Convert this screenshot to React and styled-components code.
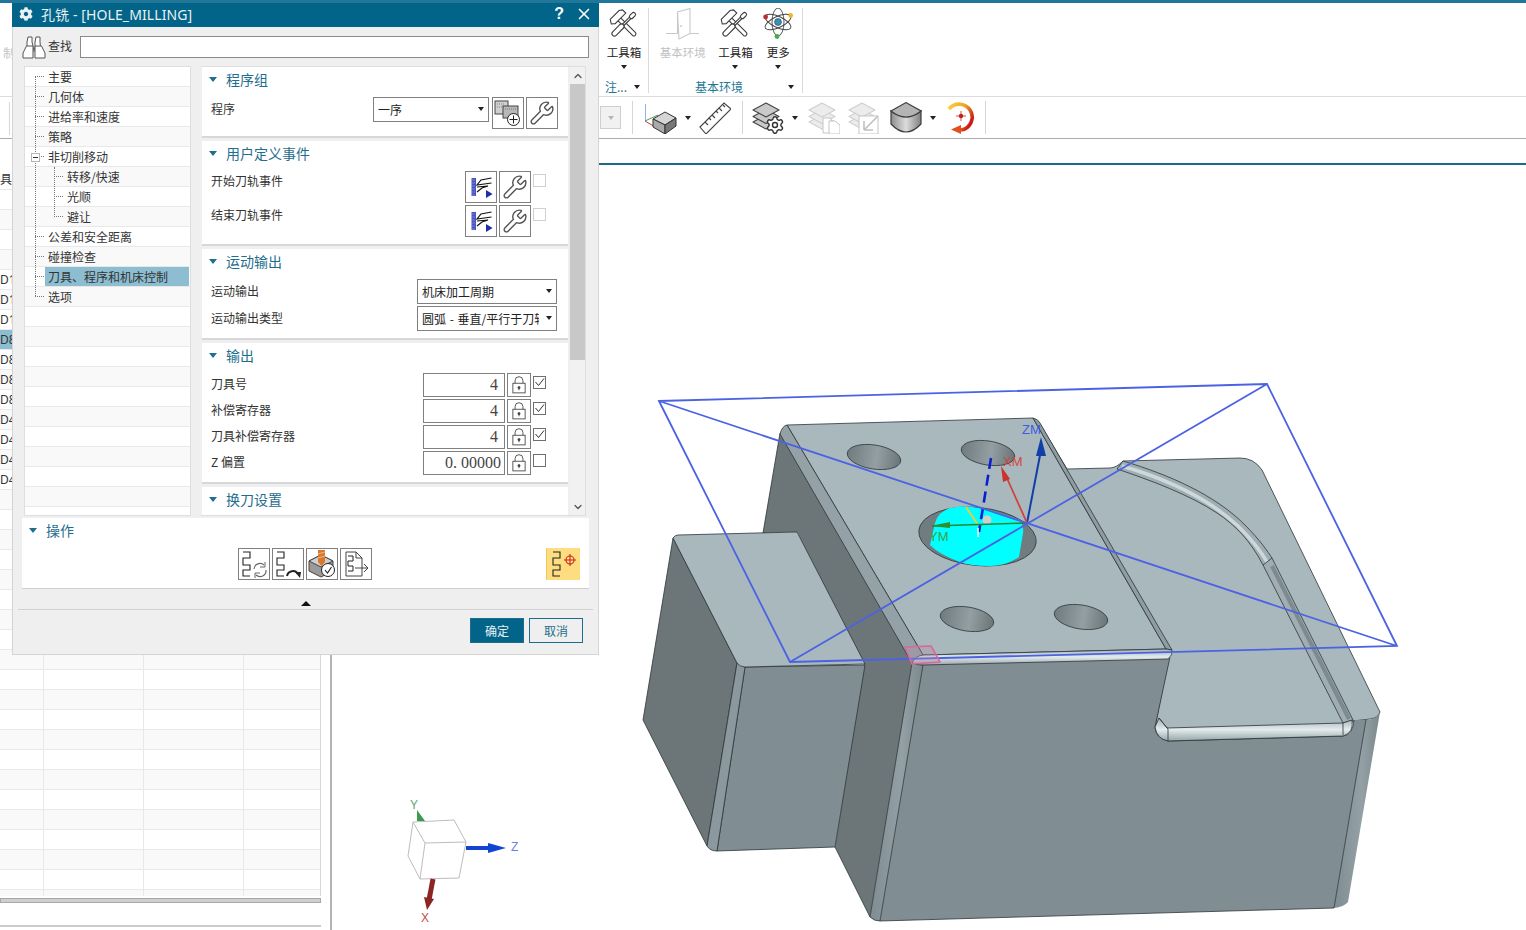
import React from "react";
import styled, { createGlobalStyle } from "styled-components";
import { Settings, Wrench, X, ChevronUp, ChevronDown } from "lucide-react";
import { FaCog } from "react-icons/fa";

const CJK = `"Noto Sans CJK SC", "Noto Sans", sans-serif`;

const Global = createGlobalStyle`
  html, body { margin: 0; padding: 0; background: #fff; }
  body { font-family: ${CJK}; font-size: 12px; color: #333; }
  * { box-sizing: border-box; }
`;

const Page = styled.div`
  position: relative;
  width: 1526px;
  height: 930px;
  overflow: hidden;
  display: flex;
  flex-direction: column;
  background: #fff;
`;
const TopStripe = styled.div`
  height: 3px;
  flex: none;
  background: #20779a;
`;
const Ribbon = styled.div`
  height: 94px;
  flex: none;
  display: flex;
  padding-top: 5px;
  border-bottom: 1px solid #dcdcdc;
`;
const RibbonHidden = styled.div`
  width: 600px;
  flex: none;
  color: #c4c4c4;
  padding: 37px 0 0 3px;
  line-height: 16px;
`;
const RibbonGroup = styled.div`
  flex: none;
  width: ${(p) => p.$w}px;
  height: 85px;
  border-right: 1px solid #dadada;
  display: flex;
  flex-direction: column;
`;
const RibbonItems = styled.div`
  display: flex;
  flex: none;
  height: 67px;
`;
const RibbonItem = styled.div`
  width: ${(p) => p.$w}px;
  display: flex;
  flex-direction: column;
  align-items: center;
  color: ${(p) => (p.$off ? "#c2c2c2" : "#222")};
  font-size: 11.5px;
  line-height: 16px;
  svg { display: block; flex: none; }
  span:first-of-type { margin-top: 4px; }
`;
const GroupFooter = styled.div`
  display: flex;
  flex: none;
  align-items: center;
  height: 14px;
  margin-top: 5px;
  padding: 0 ${(p) => p.$right}px 0 ${(p) => p.$left}px;
  color: #1f7797;
  font-size: 12px;
  line-height: 14px;
  i { margin-left: auto; }
`;
const Caret = styled.i`
  display: inline-block;
  flex: none;
  width: 0;
  height: 0;
  border-left: 3.5px solid transparent;
  border-right: 3.5px solid transparent;
  border-top: 4px solid ${(p) => p.$c || "#222"};
  margin-left: ${(p) => p.$ml || 0}px;
`;
const ItemCaret = styled(Caret)`
  margin-top: 5px;
`;
const SectionCaret = styled.i`
  display: inline-block;
  flex: none;
  width: 0;
  height: 0;
  border-left: 4.5px solid transparent;
  border-right: 4.5px solid transparent;
  border-top: 5px solid #1f6e8e;
  margin-right: 9px;
`;
const Toolbar = styled.div`
  height: 42px;
  flex: none;
  display: flex;
  align-items: center;
  border-bottom: 1px solid #ababab;
`;
const ToolbarHidden = styled.div`
  width: 600px;
  height: 32px;
  flex: none;
  padding-left: 9px;
`;
const Divider = styled.div`
  width: 1px;
  height: 33px;
  flex: none;
  background: #d6d6d6;
  margin-left: ${(p) => p.$ml || 0}px;
`;
const GreyDrop = styled.div`
  width: 21px;
  height: 23px;
  flex: none;
  border: 1px solid #cfcfcf;
  background: #f1f1f1;
  display: flex;
  align-items: center;
  justify-content: center;
`;
const ToolSlot = styled.div`
  flex: none;
  display: flex;
  margin-left: ${(p) => p.$ml}px;
`;
const MainRow = styled.div`
  flex: 1;
  display: flex;
  min-height: 0;
`;
const TablePanel = styled.div`
  width: 332px;
  flex: none;
  border-right: 2px solid #b4b4b4;
  padding-top: 31px;
  display: flex;
  flex-direction: column;
`;
const Table = styled.div`
  width: 321px;
  height: 726px;
  overflow: hidden;
  border-right: 1px solid #d8d8d8;
  flex: none;
`;
const TableRow = styled.div`
  display: grid;
  grid-template-columns: 44px 100px 100px 76px;
  height: 20px;
  background: ${(p) => (p.$sel ? "#8dbdd0" : p.$alt ? "#f9f9f9" : "#fff")};
  border-bottom: 1px solid #e8e8e8;
`;
const TableCell = styled.div`
  border-right: 1px solid #e8e8e8;
  font-family: "Noto Sans", "Noto Sans CJK SC", sans-serif;
  font-size: 12px;
  line-height: 19px;
  color: #333;
  white-space: nowrap;
  overflow: hidden;
  &:last-child { border-right: 0; }
`;
const HScroll = styled.div`
  width: 321px;
  height: 5px;
  flex: none;
  margin-top: 2px;
  background: #cfcfcf;
  border: 1px solid #a8a8a8;
`;
const PanelRule = styled.div`
  width: 321px;
  height: 2px;
  flex: none;
  margin-top: 22px;
  background: #cccccc;
`;
const ViewColumn = styled.div`
  flex: 1;
  min-width: 0;
  display: flex;
  flex-direction: column;
`;
const Band = styled.div`
  height: 26px;
  flex: none;
  border-bottom: 2px solid #1d6a88;
`;
const Viewport = styled.div`
  flex: 1;
  min-height: 0;
  svg { display: block; }
`;

/* dialog */
const Dialog = styled.div`
  position: absolute;
  left: 12px;
  top: 3px;
  width: 587px;
  height: 652px;
  background: #efefef;
  border: 1px solid #d4d4d4;
  border-top: 0;
  display: flex;
  flex-direction: column;
`;
const TitleBar = styled.div`
  height: 24px;
  flex: none;
  margin: 0 -1px;
  background: #026488;
  color: #e9f1f4;
  display: flex;
  align-items: center;
  padding: 0 6px 2px 7px;
  font-family: "Noto Sans", "Noto Sans CJK SC", sans-serif;
  font-size: 14px;
`;
const TitleText = styled.div`
  margin-left: 8px;
  flex: 1;
  white-space: nowrap;
  letter-spacing: 0.1px;
`;
const HelpMark = styled.span`
  font-family: "Liberation Sans", sans-serif;
  font-weight: 700;
  font-size: 16px;
  color: #fff;
  margin-right: 11px;
`;
const SearchRow = styled.div`
  height: 36px;
  flex: none;
  display: flex;
  align-items: flex-start;
  padding: 9px 9px 0 9px;
  font-size: 12px;
`;
const SearchLabel = styled.div`
  margin-left: 2px;
  width: 32px;
  line-height: 20px;
`;
const SearchInput = styled.div`
  flex: 1;
  height: 22px;
  background: #fff;
  border: 1px solid #8a8a8a;
`;
const DialogBody = styled.div`
  flex: none;
  height: 450px;
  margin: 3px 0 0 11px;
  display: flex;
  gap: 10px;
`;
const Tree = styled.div`
  position: relative;
  width: 167px;
  flex: none;
  background: #fff;
  border: 1px solid #dedede;
  overflow: hidden;
`;
const TreeRow = styled.div`
  height: 20px;
  display: flex;
  align-items: stretch;
  background: ${(p) => (p.$alt ? "#f9f9f9" : "#fff")};
  border-bottom: 1px solid #e8e8e8;
  padding-left: ${(p) => (p.$level ? 39 : 20)}px;
  line-height: 19px;
  font-size: 12px;
  color: #333;
  position: relative;
  &::before {
    content: ${(p) => (p.$label ? '""' : "none")};
    position: absolute;
    left: ${(p) => (p.$level ? 29 : 10)}px;
    width: 9px;
    top: 9px;
    border-top: 1px dotted #777;
  }
`;
const TreeLabel = styled.div`
  flex: 1;
  padding-left: 3px;
  margin-right: 1px;
  background: ${(p) => (p.$sel ? "#8dbdd0" : "transparent")};
`;
const TreeGuide = styled.div`
  position: absolute;
  left: ${(p) => p.$x}px;
  top: ${(p) => p.$top}px;
  height: ${(p) => p.$h}px;
  border-left: 1px dotted #777;
`;
const Expander = styled.div`
  position: absolute;
  left: 6px;
  top: 86px;
  width: 9px;
  height: 9px;
  background: #fff;
  border: 1px solid #b5b5b5;
  &::after {
    content: "";
    position: absolute;
    left: 1px;
    right: 1px;
    top: 3px;
    border-top: 1px solid #333;
  }
`;
const Pane = styled.div`
  width: 385px;
  flex: none;
  display: flex;
  border: 1px solid #dedede;
  border-left: 0;
  overflow: hidden;
`;
const SectionColumn = styled.div`
  width: 367px;
  flex: none;
  padding-left: 1px;
  display: flex;
  flex-direction: column;
  gap: 3px;
  overflow: hidden;
`;
const Section = styled.div`
  flex: none;
  height: ${(p) => p.$h}px;
  background: #fff;
  border-bottom: 2px solid #d8d8d8;
`;
const SectionHead = styled.div`
  height: 26px;
  display: flex;
  align-items: center;
  padding: 0 0 2px 7px;
  color: #1f6e8e;
  font-size: 14px;
`;
const SectionBody = styled.div`
  padding: 4px ${(p) => p.$right}px 0 9px;
  display: flex;
  flex-direction: column;
  gap: 2px;
`;
const FieldRow = styled.div`
  display: flex;
  justify-content: space-between;
  align-items: flex-start;
`;
const FieldLabel = styled.div`
  font-size: 12px;
  line-height: ${(p) => p.$lh}px;
  color: #333;
  white-space: nowrap;
`;
const Controls = styled.div`
  display: flex;
  gap: 2px;
  align-items: flex-start;
`;
const Select = styled.div`
  width: ${(p) => p.$w}px;
  height: 25px;
  flex: none;
  background: #fff;
  border: 1px solid #808080;
  display: flex;
  align-items: center;
  padding: 0 4px 1px;
  font-size: 12px;
  color: #222;
  white-space: nowrap;
  overflow: hidden;
  margin-right: ${(p) => p.$mr || 0}px;
  span { flex: 1; overflow: hidden; word-spacing: 1px; }
  i { margin-left: 7px; }
`;
const IconButton = styled.div`
  width: 32px;
  height: 32px;
  flex: none;
  background: #fff;
  border: 1px solid #808080;
  display: flex;
  align-items: center;
  justify-content: center;
  svg { display: block; }
`;
const Check = styled.div`
  width: 13px;
  height: 13px;
  flex: none;
  margin-top: 3px;
  background: #fff;
  border: 1px solid ${(p) => (p.$faint ? "#d0d0d0" : "#6f6f6f")};
  display: flex;
  align-items: center;
  justify-content: center;
`;
const NumberField = styled.div`
  width: 82px;
  height: 24px;
  flex: none;
  background: #fff;
  border: 1px solid #808080;
  display: flex;
  align-items: center;
  justify-content: ${(p) => (p.$long ? "flex-start" : "flex-end")};
  padding: ${(p) => (p.$long ? "0 0 0 21px" : "0 6px 0 0")};
  font-family: "Liberation Serif", serif;
  font-size: 16px;
  color: #444;
  overflow: hidden;
  white-space: pre;
`;
const LockButton = styled.div`
  width: 24px;
  height: 24px;
  flex: none;
  background: #fff;
  border: 1px solid #808080;
  display: flex;
  align-items: center;
  justify-content: center;
`;
const Scrollbar = styled.div`
  width: 16px;
  flex: none;
  margin-left: 2px;
  background: #f1f1f1;
  display: flex;
  flex-direction: column;
  align-items: center;
  color: #555;
`;
const ScrollArrow = styled.div`
  height: 17px;
  flex: none;
  display: flex;
  align-items: center;
  justify-content: center;
`;
const ScrollThumb = styled.div`
  width: 100%;
  height: 276px;
  flex: none;
  background: #c8c8c8;
`;
const ScrollGap = styled.div`
  flex: 1;
`;
const OpsPanel = styled.div`
  flex: none;
  height: 71px;
  margin: 2px 0 0 9px;
  width: 567px;
  background: #fff;
  border-bottom: 1px solid #cfcfcf;
  padding-right: 9px;
`;
const OpsButtons = styled.div`
  display: flex;
  gap: 2px;
  padding-left: 216px;
  margin-top: 4px;
`;
const YellowButton = styled.div`
  width: 34px;
  height: 32px;
  flex: none;
  margin-left: auto;
  background: #fedd80;
  border-left: 1px solid #f2c95a;
  display: flex;
  align-items: center;
  justify-content: center;
  svg { display: block; }
`;
const Collapser = styled.div`
  flex: none;
  height: 21px;
  margin: 0 5px;
  border-bottom: 1px solid #d0d0d0;
  display: flex;
  justify-content: center;
  padding: 12px 0 0 0;
`;
const UpCaret = styled.i`
  display: block;
  width: 0;
  height: 0;
  border-left: 5px solid transparent;
  border-right: 5px solid transparent;
  border-bottom: 5px solid #111;
`;
const DialogFooter = styled.div`
  flex: 1;
  display: flex;
  justify-content: flex-end;
  gap: 5px;
  padding: 8px 15px 0 0;
`;
const ActionButton = styled.div`
  width: 54px;
  height: 25px;
  display: flex;
  align-items: center;
  justify-content: center;
  font-size: 12px;
  background: ${(p) => (p.$primary ? "#026488" : "transparent")};
  color: ${(p) => (p.$primary ? "#e8f1f5" : "#1f6e8e")};
  border: 1px solid #1c6d8d;
`;

/* ---------- icons ---------- */
const ToolsIcon = () => (
  <svg width="32" height="32" viewBox="0 0 32 32" fill="#fff" stroke="#3d3d3d" strokeWidth="1.1">
    <g transform="rotate(-45 16 16)">
      <rect x="14" y="8" width="4" height="24" rx="2" />
      <path d="M7 7 L9.5 3 H22 L25 5 V9.5 H10 Z" />
    </g>
    <g transform="rotate(45 16 16)">
      <rect x="15" y="6" width="2" height="12" />
      <rect x="14" y="0.5" width="4" height="7" rx="2" />
      <rect x="13.5" y="17" width="5" height="15" rx="2.5" />
    </g>
  </svg>
);
const DoorIcon = () => (
  <svg width="34" height="32" viewBox="0 0 34 32" fill="none" stroke="#c9c9c9" strokeWidth="1.1">
    <path d="M0 25.5 H11.5 V4 L24 0.5 V25.5 H33" />
    <path d="M11.5 4 L13 31 L24 25.5" />
    <circle cx="15" cy="18" r="0.4" />
  </svg>
);
const AtomIcon = () => (
  <svg width="32" height="32" viewBox="0 0 32 32" fill="none" stroke="#444" strokeWidth="0.9">
    <ellipse cx="16" cy="14" rx="14" ry="5.5" transform="rotate(25 16 14)" />
    <ellipse cx="16" cy="14" rx="14" ry="5.5" transform="rotate(-25 16 14)" />
    <ellipse cx="16" cy="14" rx="14" ry="6" transform="rotate(90 16 14)" />
    <circle cx="16" cy="14" r="3.4" fill="#3c8fb6" stroke="#2b6c8a" />
    <circle cx="3.6" cy="9" r="2.4" fill="#c22b2b" stroke="none" />
    <circle cx="28.6" cy="7.4" r="2.4" fill="#f0b323" stroke="none" />
    <circle cx="15" cy="28.5" r="2.4" fill="#42b04a" stroke="none" />
  </svg>
);
const WcsIcon = () => (
  <svg width="32" height="32" viewBox="0 0 32 32" fill="none">
    <path d="M0 19 L12 26" stroke="#d5353b" strokeWidth="1" />
    <path d="M0 19 L13 13" stroke="#46a84a" strokeWidth="1" />
    <path d="M0 2 V19" stroke="#2f62c4" strokeWidth="1" />
    <path d="M20 10 L31 16 L20 23 L8 17 Z" fill="#d5d5d5" stroke="#333" strokeWidth="1" />
    <path d="M8 17 V25 L20 32 V23 Z" fill="#aaa" stroke="#333" strokeWidth="1" />
    <path d="M31 16 V24 L20 32 V23 Z" fill="#777" stroke="#333" strokeWidth="1" />
  </svg>
);
const RulerIcon = () => (
  <svg width="32" height="32" viewBox="0 0 32 32" fill="#fff" stroke="#444" strokeWidth="1.1">
    <path d="M1 25 L25 1 L32 7 L7 32 Z" />
    <path d="M6 20 L9 23 M10 16 L12 18 M13 13 L16 16 M17 9 L19 11 M20 6 L23 9 M24 3 L26 5" />
  </svg>
);
const LayerStack = ({ c, fill }) => (
  <g stroke={c} fill={fill} strokeWidth="1.1" strokeLinejoin="round">
    <path d="M14 13 L27 20 L14 27 L1 20 Z" />
    <path d="M14 7.5 L27 14.5 L14 21.5 L1 14.5 Z" />
    <path d="M14 1 L27 8 L14 15 L1 8 Z" />
  </g>
);
const LayersGearIcon = () => (
  <svg width="32" height="32" viewBox="0 0 32 32" fill="none">
    <LayerStack c="#444" fill="#c9c9c9" />
    <Settings x={13} y={13} width={20} height={20} strokeWidth={1.7} color="#333" fill="#fff" />
  </svg>
);
const LayersDocIcon = () => (
  <svg width="32" height="32" viewBox="0 0 32 32" fill="none">
    <LayerStack c="#cfcfcf" fill="#ececec" />
    <path d="M15 16 H23 V31 H15 Z" fill="#fff" stroke="#c5c5c5" />
    <path d="M21 19 H27 L32 23 V32 H21 Z" fill="#fff" stroke="#c5c5c5" />
  </svg>
);
const LayersArrowIcon = () => (
  <svg width="32" height="32" viewBox="0 0 32 32" fill="none">
    <LayerStack c="#cfcfcf" fill="#ececec" />
    <path d="M11 14 H30 V32 H11 Z" fill="#fff" stroke="#c5c5c5" />
    <path d="M16 28 V19 M16 28 H25 M16 28 L30 14" stroke="#c0c0c0" strokeWidth="1.6" />
  </svg>
);
const SolidIcon = () => (
  <svg width="32" height="32" viewBox="0 0 32 32">
    <defs>
      <linearGradient id="solidSide" x1="0" x2="1" y1="0" y2="0">
        <stop offset="0" stopColor="#8e8e8e" />
        <stop offset="0.5" stopColor="#dcdcdc" />
        <stop offset="1" stopColor="#808080" />
      </linearGradient>
    </defs>
    <path d="M1 9 V22 Q16 38 31 22 V9 Q16 21 1 9 Z" fill="url(#solidSide)" stroke="#3d3d3d" strokeWidth="1.2" />
    <path d="M1 9 L16 0.6 L31 9 Q16 21 1 9 Z" fill="#b4b4b4" stroke="#3d3d3d" strokeWidth="1.2" />
  </svg>
);
const RedoIcon = () => (
  <svg width="30" height="32" viewBox="0 0 30 32" fill="none">
    <defs>
      <linearGradient id="redoArc" x1="0" x2="1" y1="0" y2="0.6">
        <stop offset="0" stopColor="#f9d23a" />
        <stop offset="0.55" stopColor="#f2a024" />
        <stop offset="1" stopColor="#cf1a16" />
      </linearGradient>
    </defs>
    <path d="M2 7 A13 13 0 1 1 14 28" stroke="url(#redoArc)" strokeWidth="3.6" />
    <path d="M14 23 L14 32 L4 27.5 Z" fill="#e0501e" />
    <circle cx="14" cy="14" r="2.2" fill="#c4211c" />
    <path d="M14 9 V19 M9 14 H19" stroke="#c4211c" strokeWidth="0.8" />
  </svg>
);
const Binoculars = () => (
  <svg width="24" height="24" viewBox="0 0 24 24" fill="#fff" stroke="#555" strokeWidth="1">
    <path d="M6 1 H10 V6 L11 10 V16 H5 V6 Z" />
    <path d="M14 1 H18 V6 L19 16 H13 V6 Z" />
    <path d="M4.5 10 H11 V22 H1 V17 Z" />
    <path d="M13 10 H19.5 L23 17 V22 H13 Z" />
    <path d="M11 13 H13" />
  </svg>
);
const ProgramAddIcon = () => (
  <svg width="28" height="28" viewBox="0 0 28 28" fill="none" stroke="#444" strokeWidth="1">
    <rect x="1" y="2" width="13" height="13" fill="#d0d0d0" />
    <path d="M3 5 H11 M3 8 H9" stroke="#888" strokeDasharray="1 1" />
    <rect x="9" y="7" width="15" height="12" fill="#b8b8b8" />
    <path d="M11 10 H22" stroke="#777" strokeDasharray="1 1" />
    <circle cx="19.5" cy="20.5" r="6" fill="#fff" stroke="#222" />
    <path d="M19.5 16.5 V24.5 M15.5 20.5 H23.5" stroke="#222" />
  </svg>
);
const EventIcon = () => (
  <svg width="26" height="26" viewBox="0 0 26 26">
    <rect x="3.5" y="4" width="4.5" height="18" fill="#4a55c4" />
    <path d="M4.5 6 H7 M4.5 9 H7 M4.5 12 H7 M4.5 15 H7 M4.5 18 H7 M4.5 21 H7" stroke="#a7add8" strokeDasharray="1 1" />
    <path d="M23.5 4 L13 6 L9 11 L23.5 9 M9 13 L20 12 L14 14 L9 18" stroke="#111" strokeWidth="1.2" fill="none" />
    <path d="M18 16 L24.6 20 L18 24 Z" fill="#1c2ea8" />
  </svg>
);
const Lock = () => (
  <svg width="14" height="18" viewBox="0 0 16 20" fill="none" stroke="#444" strokeWidth="1">
    <path d="M3.5 8 V5 A4.5 4.5 0 0 1 12.5 5 V8" />
    <rect x="1" y="8" width="14" height="11" />
    <circle cx="8" cy="13" r="1.2" fill="#444" />
    <path d="M8 13 V16" />
  </svg>
);
const Tick = () => (
  <svg width="11" height="11" viewBox="0 0 11 11" fill="none" stroke="#333" strokeWidth="1">
    <path d="M1.5 5 L4.5 8.5 L10 1.5" />
  </svg>
);
const Serpentine = () => <path d="M3 2 H10 V8 H3 V15 H10 V20 H3 V26 H10" fill="none" stroke="#222" strokeWidth="1.1" />;
const PathCycle = () => (
  <svg width="28" height="28" viewBox="0 0 28 28" fill="none">
    <Serpentine />
    <path d="M14 19 A6 6 0 0 1 24 15 M26 20 A6 6 0 0 1 16 25" stroke="#666" strokeWidth="1.2" />
    <path d="M25 12 V17 H20 M15 28 V23 H20" stroke="#666" strokeWidth="1" />
  </svg>
);
const PathReplay = () => (
  <svg width="28" height="28" viewBox="0 0 28 28" fill="none">
    <Serpentine />
    <path d="M13 26 A6 6 0 0 1 24 24" stroke="#222" strokeWidth="2" />
    <path d="M21 22 L27 22 L26 28 Z" fill="#222" />
  </svg>
);
const VerifyIcon = () => (
  <svg width="28" height="28" viewBox="0 0 28 28" fill="none">
    <path d="M1 11 L13 5 L25 11 V21 L13 27 L1 21 Z" fill="#9a9a9a" stroke="#444" />
    <path d="M1 11 L13 17 L25 11 L13 5 Z" fill="#cfcfcf" stroke="#444" />
    <path d="M10 0 H17 V12 L13.5 16 L10 12 Z" fill="#d9772b" />
    <path d="M10 4 L17 2 M10 8 L17 6" stroke="#f2b78a" />
    <circle cx="20" cy="20" r="6.5" fill="#fff" stroke="#222" />
    <path d="M17 20 L19.5 23 L23.5 17" stroke="#222" strokeWidth="1.1" />
  </svg>
);
const PathExport = () => (
  <svg width="28" height="28" viewBox="0 0 28 28" fill="none" stroke="#444" strokeWidth="1">
    <path d="M4 2 H14 L20 8 V26 H4 Z" />
    <path d="M14 2 V8 H20" />
    <path d="M6 6 H11 V11 H6 V16 H11 V21 H6" stroke="#222" />
    <path d="M13 18 H26 M22 14 L26 18 L22 22" />
  </svg>
);
const PathTarget = () => (
  <svg width="28" height="28" viewBox="0 0 28 28" fill="none">
    <Serpentine />
    <circle cx="20" cy="10" r="4" stroke="#c8261c" strokeWidth="1.1" />
    <path d="M20 4 V16 M14 10 H26" stroke="#c8261c" strokeWidth="1.1" />
  </svg>
);

/* ---------- 3D scene ---------- */
const Hole = ({ cx, cy }) => (
  <ellipse cx={cx} cy={cy} rx="27" ry="12" transform={`rotate(9 ${cx} ${cy})`} fill="url(#holeShade)" stroke="#2f3a3e" strokeWidth="0.8" />
);
const Scene = () => (
  <svg width="1194" height="765" viewBox="332 165 1194 765">
    <defs>
      <linearGradient id="holeShade" x1="0" x2="1" y1="0" y2="0">
        <stop offset="0" stopColor="#6f7b7e" />
        <stop offset="0.55" stopColor="#939fa2" />
        <stop offset="1" stopColor="#6a7578" />
      </linearGradient>
      <linearGradient id="stripShade" x1="0" x2="0" y1="0" y2="1">
        <stop offset="0" stopColor="#a0aeb3" />
        <stop offset="0.5" stopColor="#e3ebed" />
        <stop offset="1" stopColor="#97a5a9" />
      </linearGradient>
      <linearGradient id="edgeShade" x1="0" x2="1" y1="0" y2="0">
        <stop offset="0" stopColor="#7f8c91" />
        <stop offset="0.6" stopColor="#93a1a6" />
        <stop offset="1" stopColor="#7b888c" />
      </linearGradient>
    </defs>
    <g stroke="#2c3539" strokeWidth="0.8" strokeLinejoin="round">
      {/* rear floor */}
      <path fill="#a9b8bd" d="M1040 424 L1067 469 L1110 468 Q1116 468 1123 461 L1240 458 Q1254 458 1262 470 L1380 712 Q1378 718 1370 719 L1353 721 L1343 736 L1167 741 L1155 727 L1170 650 Z" />
      {/* main front */}
      <path fill="#808d92" stroke="none" d="M923 664 L1170 657 L1155 727 Q1155 738 1168 741 L1343 736 Q1353 735 1354 720 L1366 720 L1334 908 L880 921 Z" />
      <path fill="none" d="M1170 657 L1155 727 Q1155 738 1168 741 L1343 736 Q1353 735 1354 720" />
      <path fill="none" d="M880 921 L1334 908" />
      {/* right fillet */}
      <path fill="url(#edgeShade)" stroke="none" d="M1366 720 Q1376 720 1380 712 L1348 902 Q1344 907 1334 908 Z" />
      <path fill="none" d="M1366 720 L1334 908" />
      {/* groove */}
      <path fill="#a0aeb3" d="M1123 461 C1170 475 1215 495 1245 525 C1260 540 1268 552 1272 558 L1353 720 L1343 723 L1263 565 C1250 540 1235 525 1217 513 C1190 495 1150 480 1117 469 Z" />
      <path fill="none" stroke="#cdd8dc" strokeWidth="3.5" d="M1122 466 C1170 480 1210 500 1238 526 C1254 542 1262 553 1267 562" />
      <path fill="none" stroke="#7d8a8f" strokeWidth="4" d="M1272 566 L1349 719" />
      <path fill="none" d="M1263 565 L1272 558" />
      {/* lower strip */}
      <path fill="url(#stripShade)" d="M1167 728 L1343 723 L1352 720 Q1354 733 1343 736 L1168 741 Q1157 739 1155 727 L1159 718 Z" />
      <path fill="none" d="M1168 729 V741 M1343 723 V735 M1159 718 L1168 729" />
      {/* dark side */}
      <path fill="#6c7679" stroke="none" d="M780 433 L763 533 L797 532 L864 665 L835 847 L870 917 L912 665 L918 650 Z" />
      <path fill="none" d="M780 433 L763 533 M835 847 L870 917" />
      {/* left block */}
      <path fill="#6c7679" d="M673 538 L643 720 L707 846 L737 663 Z" />
      <path fill="#808d92" d="M745 667 L865 665 L835 847 L717 851 Z" />
      <path fill="#8b989d" d="M737 663 L745 667 L717 851 Q710 851 707 846 Z" />
      <path fill="#a9b8bd" d="M673 538 Q675 535 678 535 L797 532 L865 664 L745 667 Q740 667 737 663 Z" />
      {/* vertical fillet of main block */}
      <path fill="url(#edgeShade)" d="M912 663 L923 665 L880 921 Q874 921 870 917 Z" />
      {/* top plate */}
      <path fill="#a9b8bd" d="M787 425 L1033 418 L1166 649 L923 655 Z" />
      <path fill="#8f9da2" d="M1033 418 Q1038 419 1040 423 L1172 650 L1166 649 Z" />
      <path fill="#94a2a7" d="M787 425 Q782 426 780 434 L912 663 L923 655 Z" />
      <path fill="url(#stripShade)" d="M923 655 L1166 649 L1172 650 Q1173 655 1168 659 L923 665 Q916 665 912 663 Q915 656 923 655 Z" />
    </g>
    <Hole cx={874} cy={457} />
    <Hole cx={988} cy={453} />
    <Hole cx={967} cy={619} />
    <Hole cx={1081} cy={617} />
    <ellipse cx="977.5" cy="536.5" rx="59" ry="29" transform="rotate(6 977.5 536.5)" fill="#717c80" stroke="#2f3a3e" strokeWidth="0.8" />
    <path fill="#00ffff" d="M935 523 Q938 512 950 508 Q965 504 990 510 L1020 520 Q1024 528 1023 533 L1019 557 Q1005 566 990 566 Q970 566 960 562 Q940 555 930 545 Z" />
    {/* tool axis + triad */}
    <path d="M991 458 L979 532" stroke="#0c1fd0" strokeWidth="2.6" strokeDasharray="11 6" fill="none" />
    <path d="M978 528 V537" stroke="#fff" strokeWidth="1.5" />
    <path d="M966 507 L978 525" stroke="#e8cf3c" strokeWidth="2" />
    <circle cx="987" cy="520" r="4.5" fill="#cfcfcf" />
    <path d="M1027 523 L1041 450" stroke="#103fa8" strokeWidth="2" />
    <path d="M1041 437 L1046 456 L1036 456 Z" fill="#103fa8" />
    <path d="M1027 523 L1006 476" stroke="#d2423a" strokeWidth="1.8" />
    <path d="M1001 466 L1010 479 L1003 482 Z" fill="#c9342d" />
    <path d="M1027 523 L932 526" stroke="#1f8a2a" strokeWidth="1.6" />
    <path d="M930 526 L950 522 L950 528 Z" fill="#2f8f2f" />
    <g fontFamily="'Liberation Sans', sans-serif" fontSize="13">
      <text x="1022" y="434" fill="#3d5de0">ZM</text>
      <text x="1003" y="466" fill="#d8453c">XM</text>
      <text x="929" y="541" fill="#3aa24b">YM</text>
    </g>
    {/* bounding plane */}
    <path d="M659 401 L1267 384 L1397 646 L790 662 Z M659 401 L1397 646 M1267 384 L790 662" fill="none" stroke="#4b63e3" strokeWidth="1.8" />
    {/* corner marker */}
    <path d="M905 647 L931 646 L940 662 L912 664 Z" fill="#b58aa8" fillOpacity="0.35" stroke="#d9689a" strokeWidth="1.6" strokeLinejoin="round" />
    {/* view triad */}
    <g fill="none" stroke="#bdbdbd" strokeWidth="1">
      <path d="M413 822 L454 820 L466 842 L459 878 L420 879 L408 856 Z" fill="#fff" />
      <path d="M413 822 L425 843 L466 842 M425 843 L420 879" />
    </g>
    <path d="M466 848 H490" stroke="#1144d4" strokeWidth="4" />
    <path d="M488 843 L506 848 L488 853 Z" fill="#1144d4" />
    <path d="M433 879 L429 900" stroke="#8c2424" strokeWidth="5" />
    <path d="M424 897 L434 899 L427 910 Z" fill="#8c2424" />
    <path d="M417 810 L425 821 L417 821 Z" fill="#3a9a50" />
    <g fontFamily="'Liberation Sans', sans-serif" fontSize="12">
      <text x="511" y="851" fill="#7080e0">Z</text>
      <text x="421" y="922" fill="#c04c4c">X</text>
      <text x="410" y="809" fill="#5aa86c">Y</text>
    </g>
  </svg>
);

/* ---------- data ---------- */
const treeItems = [
  ["主要", 0], ["几何体", 0], ["进给率和速度", 0], ["策略", 0], ["非切削移动", 0],
  ["转移/快速", 1], ["光顺", 1], ["避让", 1], ["公差和安全距离", 0], ["碰撞检查", 0],
  ["刀具、程序和机床控制", 0, true], ["选项", 0],
];
const emptyTreeRows = 11;
const toolValues = { 4: "D1", 5: "D1", 6: "D1", 7: "D8", 8: "D8", 9: "D8", 10: "D8", 11: "D4", 12: "D4", 13: "D4", 14: "D4" };
const outputs = [
  { label: "刀具号", value: "4", on: true },
  { label: "补偿寄存器", value: "4", on: true },
  { label: "刀具补偿寄存器", value: "4", on: true },
  { label: "Z 偏置", value: "0. 00000", on: false, long: true },
];

export default function App() {
  return (
    <Page>
      <Global />
      <TopStripe />
      <Ribbon>
        <RibbonHidden>制</RibbonHidden>
        <RibbonGroup $w={49}>
          <RibbonItems>
            <RibbonItem $w={48}>
              <ToolsIcon />
              <span>工具箱</span>
              <ItemCaret />
            </RibbonItem>
          </RibbonItems>
          <GroupFooter $left={5} $right={8}>注...<Caret /></GroupFooter>
        </RibbonGroup>
        <RibbonGroup $w={154}>
          <RibbonItems>
            <RibbonItem $w={68} $off>
              <DoorIcon />
              <span>基本环境</span>
            </RibbonItem>
            <RibbonItem $w={38}>
              <ToolsIcon />
              <span>工具箱</span>
              <ItemCaret />
            </RibbonItem>
            <RibbonItem $w={48}>
              <AtomIcon />
              <span>更多</span>
              <ItemCaret />
            </RibbonItem>
          </RibbonItems>
          <GroupFooter $left={46} $right={8}>基本环境<Caret /></GroupFooter>
        </RibbonGroup>
      </Ribbon>
      <Toolbar>
        <ToolbarHidden><Divider /></ToolbarHidden>
        <GreyDrop><Caret $c="#b5b5b5" /></GreyDrop>
        <Divider $ml={11} />
        <ToolSlot $ml={12}><WcsIcon /></ToolSlot>
        <Caret $ml={8} />
        <ToolSlot $ml={8}><RulerIcon /></ToolSlot>
        <Divider $ml={11} />
        <ToolSlot $ml={9}><LayersGearIcon /></ToolSlot>
        <Caret $ml={8} />
        <ToolSlot $ml={10}><LayersDocIcon /></ToolSlot>
        <ToolSlot $ml={8}><LayersArrowIcon /></ToolSlot>
        <ToolSlot $ml={10}><SolidIcon /></ToolSlot>
        <Caret $ml={8} />
        <ToolSlot $ml={11}><RedoIcon /></ToolSlot>
        <Divider $ml={8} />
      </Toolbar>
      <MainRow>
        <TablePanel>
          <Table>
            <TableRow>
              <TableCell>具</TableCell><TableCell /><TableCell /><TableCell />
            </TableRow>
            {Array.from({ length: 36 }, (_, i) => (
              <TableRow key={i} $alt={i % 2 === 1} $sel={i === 7}>
                <TableCell>{toolValues[i]}</TableCell><TableCell /><TableCell /><TableCell />
              </TableRow>
            ))}
          </Table>
          <HScroll />
          <PanelRule />
        </TablePanel>
        <ViewColumn>
          <Band />
          <Viewport><Scene /></Viewport>
        </ViewColumn>
      </MainRow>

      <Dialog>
        <TitleBar>
          <FaCog size={14} />
          <TitleText>孔铣 - [HOLE_MILLING]</TitleText>
          <HelpMark>?</HelpMark>
          <X size={18} strokeWidth={2.2} color="#fff" />
        </TitleBar>
        <SearchRow>
          <Binoculars />
          <SearchLabel>查找</SearchLabel>
          <SearchInput />
        </SearchRow>
        <DialogBody>
          <Tree>
            {treeItems.map(([label, level, sel], i) => (
              <TreeRow key={label} $level={level} $alt={i % 2 === 1} $label>
                <TreeLabel $sel={sel}>{label}</TreeLabel>
              </TreeRow>
            ))}
            {Array.from({ length: emptyTreeRows }, (_, i) => (
              <TreeRow key={i} $alt={(i + treeItems.length) % 2 === 1} />
            ))}
            <TreeGuide $x={10} $top={9} $h={220} />
            <TreeGuide $x={29} $top={100} $h={50} />
            <Expander />
          </Tree>
          <Pane>
            <SectionColumn>
              <Section $h={71}>
                <SectionHead><SectionCaret />程序组</SectionHead>
                <SectionBody $right={10}>
                  <FieldRow>
                    <FieldLabel $lh={23}>程序</FieldLabel>
                    <Controls>
                      <Select $w={116} $mr={1}><span>一序</span><Caret /></Select>
                      <IconButton><ProgramAddIcon /></IconButton>
                      <IconButton><Wrench size={26} strokeWidth={1.3} color="#555" /></IconButton>
                    </Controls>
                  </FieldRow>
                </SectionBody>
              </Section>
              <Section $h={105}>
                <SectionHead><SectionCaret />用户定义事件</SectionHead>
                <SectionBody $right={22}>
                  {["开始刀轨事件", "结束刀轨事件"].map((t) => (
                    <FieldRow key={t}>
                      <FieldLabel $lh={20}>{t}</FieldLabel>
                      <Controls>
                        <IconButton><EventIcon /></IconButton>
                        <IconButton><Wrench size={26} strokeWidth={1.3} color="#555" /></IconButton>
                        <Check $faint />
                      </Controls>
                    </FieldRow>
                  ))}
                </SectionBody>
              </Section>
              <Section $h={91}>
                <SectionHead><SectionCaret />运动输出</SectionHead>
                <SectionBody $right={11}>
                  <FieldRow>
                    <FieldLabel $lh={23}>运动输出</FieldLabel>
                    <Select $w={140}><span>机床加工周期</span><Caret /></Select>
                  </FieldRow>
                  <FieldRow>
                    <FieldLabel $lh={23}>运动输出类型</FieldLabel>
                    <Select $w={140}><span>圆弧 - 垂直/平行于刀轴</span><Caret /></Select>
                  </FieldRow>
                </SectionBody>
              </Section>
              <Section $h={141}>
                <SectionHead><SectionCaret />输出</SectionHead>
                <SectionBody $right={22}>
                  {outputs.map((o) => (
                    <FieldRow key={o.label}>
                      <FieldLabel $lh={22}>{o.label}</FieldLabel>
                      <Controls>
                        <NumberField $long={o.long}>{o.value}</NumberField>
                        <LockButton><Lock /></LockButton>
                        <Check>{o.on && <Tick />}</Check>
                      </Controls>
                    </FieldRow>
                  ))}
                </SectionBody>
              </Section>
              <Section $h={40}>
                <SectionHead><SectionCaret />换刀设置</SectionHead>
              </Section>
            </SectionColumn>
            <Scrollbar>
              <ScrollArrow><ChevronUp size={12} strokeWidth={2.5} /></ScrollArrow>
              <ScrollThumb />
              <ScrollGap />
              <ScrollArrow><ChevronDown size={12} strokeWidth={2.5} /></ScrollArrow>
            </Scrollbar>
          </Pane>
        </DialogBody>
        <OpsPanel>
          <SectionHead><SectionCaret />操作</SectionHead>
          <OpsButtons>
            <IconButton><PathCycle /></IconButton>
            <IconButton><PathReplay /></IconButton>
            <IconButton><VerifyIcon /></IconButton>
            <IconButton><PathExport /></IconButton>
            <YellowButton><PathTarget /></YellowButton>
          </OpsButtons>
        </OpsPanel>
        <Collapser><UpCaret /></Collapser>
        <DialogFooter>
          <ActionButton $primary>确定</ActionButton>
          <ActionButton>取消</ActionButton>
        </DialogFooter>
      </Dialog>
    </Page>
  );
}
